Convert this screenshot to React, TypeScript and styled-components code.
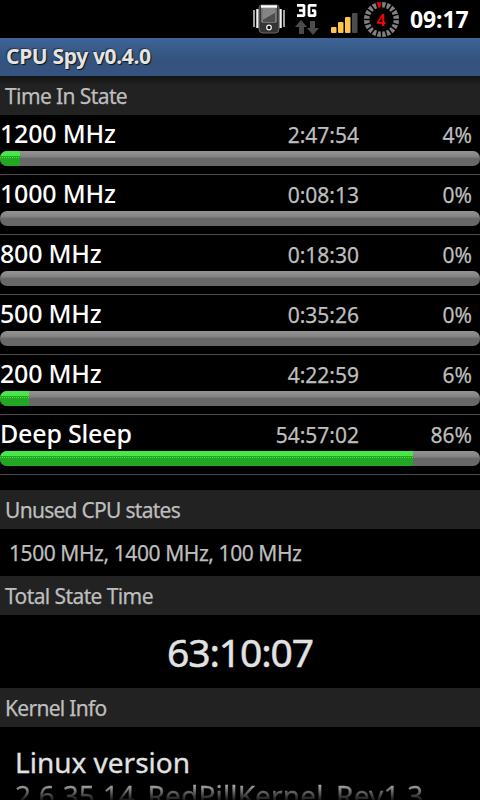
import React from 'react';
import styled, { createGlobalStyle } from 'styled-components';

interface CpuState {
  name: string;
  duration: string;
  percent: string;
  fill: number;
}

const STATES: CpuState[] = [
  { name: '1200 MHz', duration: '2:47:54', percent: '4%', fill: 20 },
  { name: '1000 MHz', duration: '0:08:13', percent: '0%', fill: 0 },
  { name: '800 MHz', duration: '0:18:30', percent: '0%', fill: 0 },
  { name: '500 MHz', duration: '0:35:26', percent: '0%', fill: 0 },
  { name: '200 MHz', duration: '4:22:59', percent: '6%', fill: 29 },
  { name: 'Deep Sleep', duration: '54:57:02', percent: '86%', fill: 413 },
];

const GlobalStyle = createGlobalStyle`
  * {
    box-sizing: border-box;
  }

  body {
    margin: 0;
    background: #000;
    font-family: 'Noto Sans', 'Open Sans', sans-serif;
  }
`;

const Screen = styled.div`
  display: flex;
  flex-direction: column;
  width: 480px;
  height: 800px;
  overflow: hidden;
  background: #000;
  color: #bebebe;
  white-space: nowrap;
`;

const StatusBar = styled.header`
  display: flex;
  flex: none;
  justify-content: flex-end;
  height: 38px;
  padding-right: 10px;
`;

const Clock = styled.time`
  width: 60px;
  margin-left: 10px;
  font-size: 23px;
  font-weight: 700;
  line-height: 38px;
  letter-spacing: -0.1px;
  color: #fff;
`;

const TitleBar = styled.h1`
  flex: none;
  height: 38px;
  margin: 0;
  padding-left: 6px;
  background: linear-gradient(#3e6596, #34547f 55%, #34547f);
  font-size: 21px;
  font-weight: 700;
  line-height: 37px;
  letter-spacing: -0.35px;
  color: #e4e4e4;
  text-shadow: 1px 1px 1px #111, -1px -1px 1px #26364c;
`;

const SectionHeader = styled.h2<{ $shadow?: boolean; $spacing?: number }>`
  flex: none;
  height: 39px;
  margin: 0;
  padding-left: 5px;
  background: ${({ $shadow }) => ($shadow ? 'linear-gradient(#131313, #222 9px)' : '#222')};
  font-size: 21px;
  font-weight: 400;
  line-height: 40px;
  letter-spacing: ${({ $spacing = -0.6 }) => $spacing}px;
  -webkit-text-stroke: 0.25px;
`;

const StateList = styled.ul`
  flex: none;
  height: 375px;
  margin: 0;
  padding: 0;
  list-style: none;
`;

const StateItem = styled.li`
  height: 60px;
  border-bottom: 1px solid #4a4a4a;
`;

const StateLine = styled.div`
  display: grid;
  grid-template-columns: 200px 159px 113px;
  height: 36px;
  line-height: 38px;
`;

const StateName = styled.span`
  margin-top: -1px;
  font-size: 25px;
  font-weight: 500;
  letter-spacing: -0.2px;
  color: #fff;
`;

const StateValue = styled.span`
  padding-top: 1px;
  font-size: 21px;
  text-align: right;
  -webkit-text-stroke: 0.25px;
`;

const Track = styled.div`
  height: 15px;
  overflow: hidden;
  border-radius: 7px;
  background: linear-gradient(#949494, #858585 5px, #757575 7px, #686868 7px, #686868);
`;

const Fill = styled.div`
  height: 100%;
  background:
    repeating-linear-gradient(90deg, #49e649 0 1px, #23a623 1px 2px) 0 6px / 100% 1px no-repeat,
    linear-gradient(#49e649 5px, #23a623 5px);
`;

const UnusedStates = styled.p`
  flex: none;
  height: 47px;
  margin: 0;
  padding-left: 9px;
  font-size: 21px;
  line-height: 48px;
  letter-spacing: -0.43px;
  -webkit-text-stroke: 0.25px;
`;

const TotalTime = styled.p`
  flex: none;
  height: 73px;
  margin: 0;
  font-size: 39px;
  line-height: 74px;
  letter-spacing: -1.1px;
  text-align: center;
  color: #e2e2e2;
  -webkit-text-stroke: 0.5px;
`;

const KernelInfo = styled.div`
  height: 73px;
  padding: 19px 15px 0;
  overflow: hidden;
  font-size: 28px;
  line-height: 33px;
  color: #e2e2e2;
`;

const KernelLine = styled.div<{ $faded?: boolean }>`
  -webkit-text-stroke: 0.3px;

  ${({ $faded }) =>
    $faded &&
    `
    letter-spacing: 0.15px;
    color: transparent;
    background: linear-gradient(#c0c0c0 4px, #333 18px, #111 22px);
    background-clip: text;
  `}
`;

const VibrateIcon = () => (
  <svg width="36" height="38" viewBox="0 0 36 38">
    <path d="M3 10v17M33 10v17" stroke="#a0a0a0" strokeWidth="2" />
    <path d="M6.5 9v19M29.5 9v19" stroke="#f0f0f0" strokeWidth="2.5" />
    <path d="M10 5h16q2 0 2 3v21q0 4-4 4H12q-4 0-4-4V8q0-3 2-3z" fill="#343434" stroke="#666" />
    <path d="M11 7v15h14V7" fill="#444" stroke="#aaa" />
    <path d="M10 6.500h16" stroke="#fff" strokeWidth="2.500" />
    <path d="M12 8h12v5L12 20z" fill="#858585" />
    <path d="M12 20L24 13v9H12z" fill="#4d4d4d" />
    <circle cx="18" cy="27.5" r="2.3" fill="#111" stroke="#eee" strokeWidth="1.3" />
  </svg>
);

const NetworkIcon = () => (
  <svg width="26" height="38" viewBox="0 0 26 38">
    <path d="M2 5.300h7v10.400H2M4 10.500h5M21.500 5.300H14v10.400h6v-5h-3" fill="none" stroke="#fff" strokeWidth="2.700" strokeLinejoin="bevel" />
    <path d="M6 20l6 7H9v7H4v-7H0zM18 35l6-7h-4v-7h-5v7h-3z" fill="#4b4b4b" />
  </svg>
);

const SignalIcon = () => (
  <svg width="28" height="38" viewBox="0 0 28 38">
    <rect x="0" y="27" width="5.500" height="6" rx="1" fill="#ffc44b" />
    <rect x="7" y="22" width="5.500" height="11" rx="1" fill="#ffc44b" />
    <rect x="14" y="17" width="5.500" height="16" rx="1" fill="#ffc44b" />
    <rect x="21" y="13" width="5.500" height="20" rx="1" fill="#4c4c4c" />
  </svg>
);

const BatteryIcon = () => (
  <svg width="36" height="38" viewBox="0 0 36 38">
    {Array.from({ length: 20 }, (_, i) => (
      <path
        key={i}
        d="M15.400 2h4.200l-1 5.500h-2.200z"
        fill={i === 19 ? '#f00' : '#818181'}
        transform={`rotate(${i * 18 + 9} 17.500 19.500)`}
      />
    ))}
    <text x="17.200" y="25.500" textAnchor="middle" fontSize="16" fontWeight="600" fill="#f00">
      4
    </text>
  </svg>
);

const StatusIcons = styled.div`
  display: flex;

  svg {
    display: block;
  }

  svg:nth-child(2) {
    margin-left: 8px;
  }

  svg:nth-child(3) {
    margin-left: 10px;
  }

  svg:nth-child(4) {
    margin-left: 5px;
  }
`;

const App: React.FC = () => {
  return (
    <Screen>
      <GlobalStyle />
      <StatusBar>
        <StatusIcons>
          <VibrateIcon />
          <NetworkIcon />
          <SignalIcon />
          <BatteryIcon />
        </StatusIcons>
        <Clock>09:17</Clock>
      </StatusBar>
      <TitleBar>CPU Spy v0.4.0</TitleBar>

      <SectionHeader $shadow>Time In State</SectionHeader>
      <StateList>
        {STATES.map((state) => (
          <StateItem key={state.name}>
            <StateLine>
              <StateName>{state.name}</StateName>
              <StateValue>{state.duration}</StateValue>
              <StateValue>{state.percent}</StateValue>
            </StateLine>
            <Track>
              <Fill style={{ width: state.fill }} />
            </Track>
          </StateItem>
        ))}
      </StateList>

      <SectionHeader $spacing={-0.72}>Unused CPU states</SectionHeader>
      <UnusedStates>1500 MHz, 1400 MHz, 100 MHz</UnusedStates>

      <SectionHeader>Total State Time</SectionHeader>
      <TotalTime>63:10:07</TotalTime>

      <SectionHeader $spacing={-0.7}>Kernel Info</SectionHeader>
      <KernelInfo>
        <KernelLine>Linux version</KernelLine>
        <KernelLine $faded>2.6.35.14_RedPillKernel_Rev1.3</KernelLine>
      </KernelInfo>
    </Screen>
  );
};

export default App;
